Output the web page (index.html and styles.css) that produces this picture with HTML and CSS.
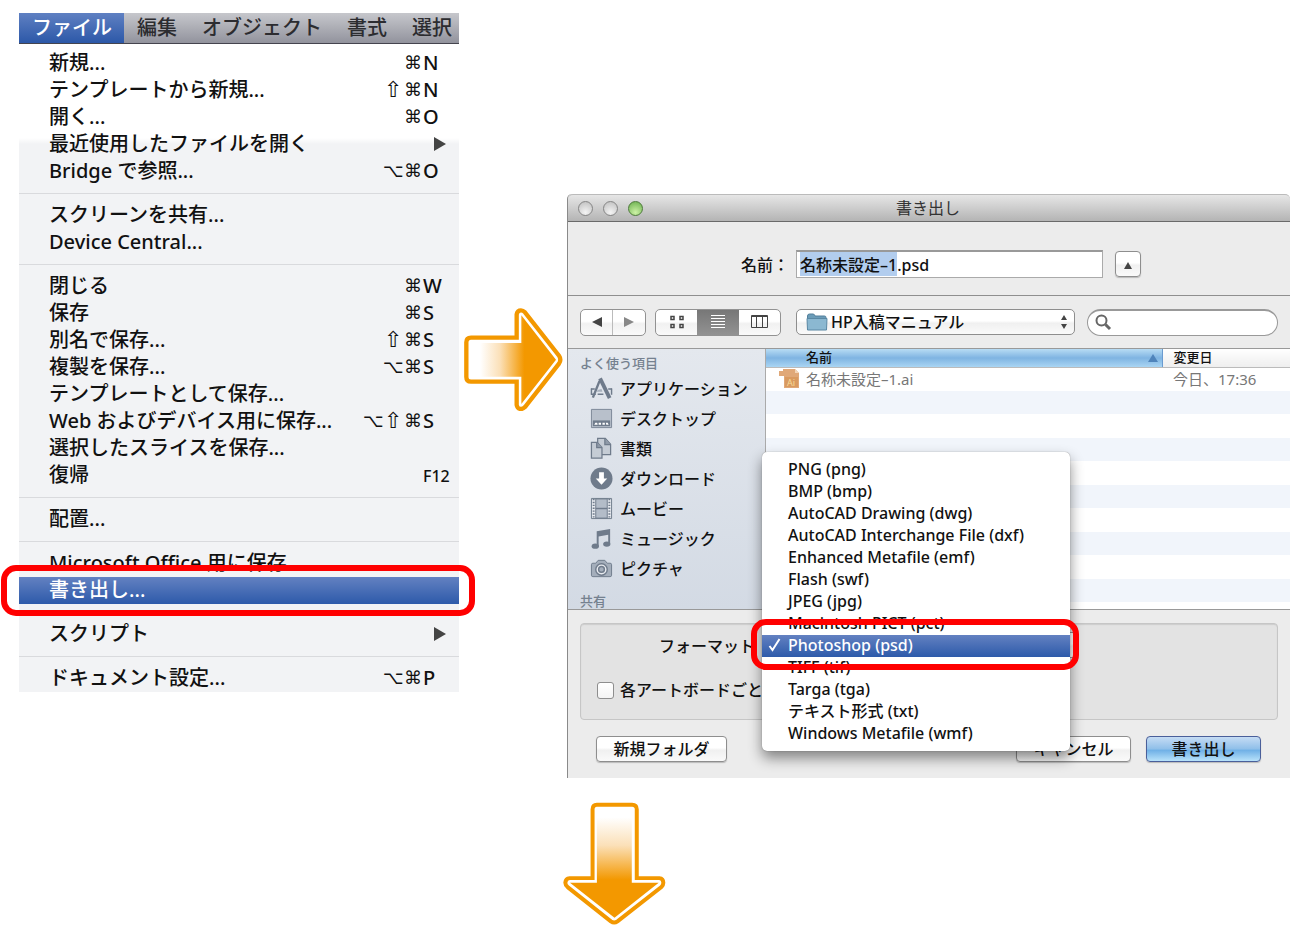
FILE: index.html
```
<!DOCTYPE html>
<html lang="ja">
<head>
  <meta charset="UTF-8" />
  <title>書き出し | HP入稿マニュアル</title>
  <meta name="viewport" content="width=device-width, initial-scale=1.0" />
  <link rel="stylesheet" href="styles.css">
</head>
<body>
  <main class="page">

    <!-- File menu -->
    <section class="app-menu">
      <nav class="menubar">
        <button class="menubar-item active">ファイル</button>
        <button class="menubar-item">編集</button>
        <button class="menubar-item">オブジェクト</button>
        <button class="menubar-item">書式</button>
        <button class="menubar-item">選択</button>
      </nav>
      <div class="menu" role="menu">
        <button class="menu-item" role="menuitem">新規...<span class="keys"><i>⌘</i><b>N</b></span></button>
        <button class="menu-item" role="menuitem">テンプレートから新規...<span class="keys"><i class="shift">⇧</i><i>⌘</i><b>N</b></span></button>
        <button class="menu-item" role="menuitem">開く...<span class="keys"><i>⌘</i><b>O</b></span></button>
        <button class="menu-item" role="menuitem">最近使用したファイルを開く<span class="submenu"></span></button>
        <button class="menu-item" role="menuitem">Bridge で参照...<span class="keys"><i>⌥</i><i>⌘</i><b>O</b></span></button>
        <hr>
        <button class="menu-item" role="menuitem">スクリーンを共有...</button>
        <button class="menu-item" role="menuitem">Device Central...</button>
        <hr>
        <button class="menu-item" role="menuitem">閉じる<span class="keys"><i>⌘</i><b>W</b></span></button>
        <button class="menu-item" role="menuitem">保存<span class="keys"><i>⌘</i><b>S</b></span></button>
        <button class="menu-item" role="menuitem">別名で保存...<span class="keys"><i class="shift">⇧</i><i>⌘</i><b>S</b></span></button>
        <button class="menu-item" role="menuitem">複製を保存...<span class="keys"><i>⌥</i><i>⌘</i><b>S</b></span></button>
        <button class="menu-item" role="menuitem">テンプレートとして保存...</button>
        <button class="menu-item" role="menuitem">Web およびデバイス用に保存...<span class="keys"><i>⌥</i><i class="shift">⇧</i><i>⌘</i><b>S</b></span></button>
        <button class="menu-item" role="menuitem">選択したスライスを保存...</button>
        <button class="menu-item" role="menuitem">復帰<span class="keys"><b class="fkey">F12</b></span></button>
        <hr>
        <button class="menu-item" role="menuitem">配置...</button>
        <hr>
        <button class="menu-item" role="menuitem">Microsoft Office 用に保存</button>
        <button class="menu-item selected" role="menuitem">書き出し...<span class="ring"></span></button>
        <hr>
        <button class="menu-item" role="menuitem">スクリプト<span class="submenu"></span></button>
        <hr>
        <button class="menu-item" role="menuitem">ドキュメント設定...<span class="keys"><i>⌥</i><i>⌘</i><b>P</b></span></button>
      </div>
    </section>

    <svg class="arrow-right" viewBox="27 25 297 309" aria-hidden="true">
      <defs>
        <linearGradient id="fadeRight" gradientUnits="userSpaceOnUse" x1="75" y1="0" x2="208" y2="0">
          <stop offset="0" stop-color="#fff"/><stop offset=".45" stop-color="#fbe0b8"/><stop offset="1" stop-color="#f39800"/>
        </linearGradient>
      </defs>
      <path d="M34 128Q34 114 48 114H185V44Q187 32 198 32Q204 32 210 38L312 168Q320 180 312 192L210 322Q204 328 198 328Q187 328 185 316V246H48Q34 246 34 232Z" fill="#fff" stroke="#f39800" stroke-width="13"/>
      <path d="M46 130H199V47L303 180L199 313V231H46Z" fill="url(#fadeRight)"/>
    </svg>

    <div class="column">
      <!-- Export dialog -->
      <section class="dialog">
        <header class="titlebar">
          <span class="light"></span><span class="light"></span><span class="light green"></span>
          <h1>書き出し</h1>
        </header>

        <div class="name-row">
          <label for="filename">名前：</label>
          <input type="text" id="filename" value="名称未設定–1.psd" autocomplete="off" spellcheck="false">
          <button class="btn square" aria-label="閉じる"><svg width="10" height="8" viewBox="0 0 10 8"><path d="M5 0L9 7H1Z" fill="#444"/></svg></button>
        </div>

        <div class="toolbar">
          <div class="btn-group nav-group">
            <button aria-label="戻る"><svg width="12" height="12" viewBox="0 0 12 12"><path d="M11 1V11L1 6Z" fill="#444"/></svg></button>
            <button aria-label="進む"><svg width="12" height="12" viewBox="0 0 12 12"><path d="M1 1V11L11 6Z" fill="#888"/></svg></button>
          </div>
          <div class="btn-group view-group">
            <button aria-label="アイコン"><svg width="16" height="14" viewBox="0 0 16 14" fill="none" stroke="#444" stroke-width="1.5"><path d="M2 1.5h3v3H2zM11 1.5h3v3h-3zM2 9.5h3v3H2zM11 9.5h3v3h-3z"/></svg></button>
            <button class="on" aria-label="リスト"><svg width="14" height="14" viewBox="0 0 14 14" stroke="#fff"><path d="M0 .5h14M0 3.5h14M0 6.5h14M0 9.5h14M0 12.5h14"/></svg></button>
            <button aria-label="カラム"><svg width="17" height="14" viewBox="0 0 17 14" fill="none" stroke="#444"><path d="M.5 .5h16v12H.5zM5.5 1v12M11.5 1v12M.5 1.5h16"/></svg></button>
          </div>
          <div class="folder">
            <svg class="folder-icon" width="22" height="18" viewBox="0 0 22 18"><path d="M1.500 3Q1.500 1 3.500 1H7Q8.500 1 9 3H18.500Q20 3 20 4.500V6H1.500Z" fill="#6b9cb8" stroke="#527f9b"/><path d="M1 5.500H21L20.500 17H1.500Z" fill="#8bb8d1" stroke="#5a88a4"/></svg>
            <select class="popup-button" aria-label="フォルダ"><option>HP入稿マニュアル</option></select>
            <svg class="updown" width="8" height="14" viewBox="0 0 8 14"><path d="M4 0L7 5H1ZM4 14L1 9H7Z" fill="#444"/></svg>
          </div>
          <div class="search">
            <svg width="17" height="17" viewBox="0 0 17 17" fill="none" stroke="#666"><circle cx="6.500" cy="6.500" r="5" stroke-width="2"/><path d="M10.500 10.500L15 15" stroke-width="3"/></svg>
            <input type="text" aria-label="検索">
          </div>
        </div>

        <div class="browser">
          <aside class="sidebar">
            <h2>よく使う項目</h2>
            <ul>
              <li><a href="#">
                <svg viewBox="0 0 24 24" fill="none" stroke="#6f7b8b"><path d="M10 4L3 21.500" stroke-width="2.500"/><path d="M10.500 1.500L20.500 22" stroke-width="4"/><path d="M1.500 12V18.500M22.500 12V18.500" stroke-width="1.500"/><path d="M1 12.500H5M19 12.500H23M1 18H6M8 18H14" stroke-width="1.500"/><path d="M8 13.500L12 12.500L13 15.500H7Z" fill="#a9b2be" stroke="none"/></svg>
                アプリケーション</a></li>
              <li><a href="#">
                <svg viewBox="0 0 24 24"><path d="M1.500 2.500h21v19h-21z" fill="#b8c0cb" stroke="#7b8796"/><path d="M3 14h18v6H3z" fill="#6f7b8b"/><path d="M4.500 18.500l1-2h2l.5 2zM9 18.500v-2h2.500v2zM13 18.500v-2h2.500v2zM19.500 18.500l-1-2h-2l.5 2z" fill="#fff"/></svg>
                デスクトップ</a></li>
              <li><a href="#">
                <svg viewBox="0 0 24 24" fill="#c5ccd5" stroke="#6f7b8b" stroke-width="1.300"><path d="M8 1.500H16L21.500 7.500V18.500H8Z"/><path d="M15.500 1.500V8H21.500" fill="#8e99a7"/><path d="M1.500 5.500H7.500L12.500 11V22H1.500Z"/><path d="M7 5.500V11H12.500" fill="#8e99a7"/></svg>
                書類</a></li>
              <li><a href="#">
                <svg viewBox="0 0 24 24"><circle cx="12" cy="12" r="11.500" fill="#6f7b8b"/><path d="M9.500 5.500h5V12H18L12 18.500L6 12H9.500Z" fill="#fff"/></svg>
                ダウンロード</a></li>
              <li><a href="#">
                <svg viewBox="0 0 24 24"><path d="M1.500 1.500h21v21h-21z" fill="#e8ebf0" stroke="#6f7b8b"/><path d="M6 2h12v20H6z" fill="#b3bcc8" stroke="#6f7b8b"/><path d="M6 12h12" stroke="#6f7b8b" stroke-width="1.500"/><path d="M3.800 2v20M20.200 2v20" stroke="#6f7b8b" stroke-width="2" stroke-dasharray="1.500 1.500"/></svg>
                ムービー</a></li>
              <li><a href="#">
                <svg viewBox="0 0 24 24" fill="#6f7b8b"><path d="M7 4.500L21 2V17.500H19V8L9 10V20H7Z"/><ellipse cx="5.500" cy="20" rx="3.800" ry="2.800"/><ellipse cx="17.500" cy="17.800" rx="3.800" ry="2.800"/></svg>
                ミュージック</a></li>
              <li><a href="#">
                <svg viewBox="0 0 24 24" fill="#a4aebb" stroke="#6f7b8b"><path d="M3 6.500H6L8.500 3.500H15.500L18 6.500H21Q22.500 6.500 22.500 8V19Q22.500 20.500 21 20.500H3Q1.500 20.500 1.500 19V8Q1.500 6.500 3 6.500Z"/><circle cx="12" cy="13" r="6" fill="#e8ebf0" stroke-width="1.500"/><circle cx="12" cy="13" r="3" stroke-width="1.500"/></svg>
                ピクチャ</a></li>
            </ul>
            <h2>共有</h2>
          </aside>
          <div class="files">
            <table>
              <thead>
                <tr><th class="sorted">名前<span class="sort"></span></th><th class="date">変更日</th></tr>
              </thead>
              <tbody>
                <tr>
                  <td><svg class="ai-icon" width="21" height="19" viewBox="0 0 21 19"><path d="M0 2H4V0H16L20 4V19H5V7H0Z" fill="#e0a878"/><path d="M16 0V4H20Z" fill="#f3d5b8"/><path d="M6 8H19V18H6Z" fill="#d99a60"/><text x="8" y="17" font-size="9" fill="#f8dc98">Ai</text></svg>名称未設定–1.ai</td>
                  <td class="date">今日、17:36</td>
                </tr>
              </tbody>
            </table>
          </div>
        </div>

        <footer class="options">
          <div class="option-box">
            <div class="format-row">
              <label for="format">フォーマット</label>
              <div class="format-field">
                <select id="format" class="popup-button"><option>Photoshop (psd)</option></select>
                <ul class="format-list">
                  <li>PNG (png)</li>
                  <li>BMP (bmp)</li>
                  <li>AutoCAD Drawing (dwg)</li>
                  <li>AutoCAD Interchange File (dxf)</li>
                  <li>Enhanced Metafile (emf)</li>
                  <li>Flash (swf)</li>
                  <li>JPEG (jpg)</li>
                  <li>Macintosh PICT (pct)</li>
                  <li class="selected"><svg class="check" width="13" height="14" viewBox="0 0 13 14"><path d="M1.500 8L4.500 12L11.500 1" fill="none" stroke="#fff" stroke-width="2"/></svg>Photoshop (psd)<span class="ring"></span></li>
                  <li>TIFF (tif)</li>
                  <li>Targa (tga)</li>
                  <li>テキスト形式 (txt)</li>
                  <li>Windows Metafile (wmf)</li>
                </ul>
              </div>
            </div>
            <label class="artboards"><input type="checkbox">各アートボードごと</label>
          </div>
          <div class="actions">
            <button class="btn new-folder">新規フォルダ</button>
            <button class="btn">キャンセル</button>
            <button class="btn primary">書き出し</button>
          </div>
        </footer>
      </section>

      <svg class="arrow-down" viewBox="36 35 310 368" aria-hidden="true">
        <defs>
          <linearGradient id="fadeDown" gradientUnits="userSpaceOnUse" x1="0" y1="80" x2="0" y2="268">
            <stop offset="0" stop-color="#fff"/><stop offset=".45" stop-color="#fbe0b8"/><stop offset="1" stop-color="#f39800"/>
          </linearGradient>
        </defs>
        <path d="M138 42H244Q258 42 258 56V263H326Q338 264 338 277Q338 284 332 290L200 393Q190 400 180 393L50 290Q43 284 43 277Q44 264 56 263H125V56Q125 42 138 42Z" fill="#fff" stroke="#f39800" stroke-width="12"/>
        <path d="M138 54H243V277H324L191 382L57 277H138Z" fill="url(#fadeDown)"/>
      </svg>
    </div>
  </main>

  <script>
    // Select the name without its extension
    const filename = document.getElementById("filename");
    filename.focus();
    filename.setSelectionRange(0, filename.value.lastIndexOf("."));
  </script>
</body>
</html>
```
FILE: styles.css
```
* { box-sizing: border-box; }

body {
  margin: 0;
  background: #fff;
  color: #111;
  font-family: "Noto Sans", "Noto Sans CJK JP", sans-serif;
  font-size: 16px;
  font-weight: 500;
}

button, input, select {
  font: inherit;
  color: inherit;
  margin: 0;
}

button {
  border: none;
  background: none;
  padding: 0;
}

h1, h2, ul {
  margin: 0;
  padding: 0;
  list-style: none;
}

.page {
  display: flex;
  align-items: flex-start;
  padding-top: 13px;
  padding-left: 19px;
}

/* File menu */
.app-menu {
  flex: 0 0 440px;
  font-size: 20px;
}

.menubar {
  display: flex;
  height: 31px;
  overflow: hidden;
  background: linear-gradient(#c6c7cc, #92939d);
  border-bottom: 1px solid #44444e;
}

.menubar-item {
  flex: none;
  padding: 0 12px 0 13px;
  line-height: 28px;
  color: #2c2c30;
}

.menubar-item.active {
  color: #fff;
  background: linear-gradient(#5f80c2, #2c58a8);
}

.menu {
  padding-top: 6px;
  background: linear-gradient(#fff 94px, #f2f3f5 100px);
}

.menu hr {
  height: 1px;
  margin: 8px 0;
  border: none;
  background: #d9dadd;
}

.menu-item {
  position: relative;
  display: flex;
  width: 100%;
  height: 27px;
  padding-left: 30px;
  padding-bottom: 2px;
  line-height: 25px;
  text-align: left;
  white-space: nowrap;
}

.selected {
  color: #fff;
  background: linear-gradient(#6381c1, #2d5aaa);
}

.keys {
  display: flex;
  margin-left: auto;
}

.keys i {
  width: 20px;
  font-family: "DejaVu Sans", sans-serif;
  font-size: 18px;
  font-style: normal;
  text-align: center;
}

.keys .shift { font-size: 22px; }

.keys b {
  width: 36px;
  font-weight: inherit;
}

.keys .fkey {
  font-size: 16px;
  padding-top: 2px;
}

.submenu {
  margin: 6px 13px 0 auto;
  border-left: 12px solid #444;
  border-top: 7px solid transparent;
  border-bottom: 7px solid transparent;
  height: 14px;
}

.ring {
  position: absolute;
  z-index: 3;
  top: -12px;
  right: -16px;
  bottom: -12px;
  left: -18px;
  border: 6px solid #f00;
  border-radius: 15px;
}

/* Arrows */
.arrow-right {
  flex: none;
  width: 99px;
  height: 103px;
  margin-top: 295px;
  margin-left: 5px;
}

.arrow-down {
  display: block;
  width: 103px;
  height: 123px;
  margin-top: 24px;
}

.column {
  flex: 1;
  margin-top: 181px;
  min-width: 0;
}

/* Export dialog */
.dialog {
  margin-left: 4px;
  border-left: 1px solid #8a8a8a;
  border-radius: 5px 5px 0 0;
  background: #ececec;
}

.titlebar {
  display: flex;
  align-items: center;
  gap: 10px;
  height: 28px;
  padding: 0 10px;
  border-top: 1px solid #bbb;
  border-bottom: 1px solid #6a6a6a;
  border-radius: 5px 5px 0 0;
  background: linear-gradient(#e6e6e6, #b4b4b4);
}

.titlebar h1 {
  flex: 1;
  padding-right: 77px;
  font-size: 16px;
  font-weight: 400;
  line-height: 24px;
  text-align: center;
  color: #333;
}

.light {
  width: 15px;
  height: 15px;
  border: 1px solid #858585;
  border-radius: 50%;
  background: radial-gradient(circle at 50% 80%, #f4f4f4, #bdbdbd);
}

.light.green {
  border-color: #4d7a3a;
  background: radial-gradient(circle at 50% 80%, #cdf2a6, #68ae4c);
}

.name-row {
  display: flex;
  align-items: center;
  height: 74px;
  padding: 10px 149px 0 173px;
  border-bottom: 1px solid #8f8f8f;
}

.name-row label {
  width: 55px;
  white-space: nowrap;
}

.name-row input {
  flex: 1;
  min-width: 0;
  height: 28px;
  margin-right: 12px;
  padding: 0 3px;
  border: 1px solid #aaa;
  border-top: 2px solid #999;
  background: #fff;
  outline: none;
}

.name-row input::selection {
  color: #111;
  background: #b2cdee;
}

.btn {
  height: 26px;
  border: 1px solid #8e8e8e;
  border-radius: 4px;
  background: linear-gradient(#fff 45%, #f0f0f0 55%, #fafafa);
  box-shadow: 0 1px 1px #bbb;
}

.btn.square {
  width: 26px;
  line-height: 16px;
}

.toolbar {
  display: flex;
  align-items: center;
  height: 52px;
  padding: 0 12px;
}

.btn-group {
  display: flex;
  height: 27px;
  border: 1px solid #929292;
  border-radius: 5px;
  background: linear-gradient(#fff 45%, #f1f1f1 55%, #fafafa);
  overflow: hidden;
}

.btn-group button {
  display: flex;
  flex: 1;
  align-items: center;
  justify-content: center;
}

.nav-group { width: 66px; margin-right: 9px; }
.nav-group button + button { box-shadow: -1px 0 #bbb; }
.view-group { width: 126px; margin-right: 15px; }
.view-group .on { background: linear-gradient(#777, #929292); }

.popup-button {
  width: 100%;
  height: 26px;
  border: 1px solid #8e8e8e;
  border-radius: 5px;
  background: linear-gradient(#fff 45%, #f0f0f0 55%, #fafafa);
  appearance: none;
}

.folder {
  position: relative;
  flex: 8;
  min-width: 0;
  margin-right: 12px;
}

.folder .popup-button { padding: 0 24px 0 34px; display: block; }
.folder-icon { position: absolute; top: 4px; left: 10px; }
.updown { position: absolute; top: 6px; right: 7px; }

.search {
  display: flex;
  flex: 5;
  align-items: center;
  min-width: 0;
  height: 27px;
  padding: 0 7px;
  border: 1px solid #999;
  border-top: 2px solid #999;
  border-radius: 14px;
  background: #fff;
}

.search svg { flex: none; }

.search input {
  width: 100%;
  min-width: 0;
  border: none;
  outline: none;
  background: none;
}

/* File browser */
.browser {
  display: flex;
  height: 262px;
  border-top: 1px solid #999;
  border-bottom: 1px solid #999;
}

.sidebar {
  flex: 0 0 198px;
  overflow: hidden;
  border-right: 1px solid #aaa;
  background: linear-gradient(#e4e8ee, #d3dae4);
}

.sidebar h2 {
  height: 24px;
  padding: 4px 0 0 12px;
  font-size: 13px;
  font-weight: 500;
  line-height: 20px;
  color: #75818f;
}

.sidebar ul { margin-bottom: 4px; }

.sidebar a {
  display: flex;
  align-items: center;
  gap: 7px;
  height: 30px;
  padding-left: 22px;
  color: inherit;
  text-decoration: none;
}

.sidebar svg { width: 23px; height: 23px; }

.files {
  flex: 1;
  background: repeating-linear-gradient(#fff 0 24px, #f1f5fb 24px 47px) 0 18px;
}

.files table {
  width: 100%;
  border-collapse: collapse;
  table-layout: fixed;
}

.files th {
  height: 18px;
  padding: 0 0 2px 40px;
  font-size: 13px;
  font-weight: 500;
  line-height: 14px;
  text-align: left;
  background: linear-gradient(#fff, #eee);
  border-bottom: 1px solid #bbb;
}

.files th.sorted {
  background: linear-gradient(#b8dcf4, #7fb4e2 50%, #a9d5f3);
  border-right: 1px solid #6a9bd0;
}

.sort {
  float: right;
  margin: 4px 4px 0 0;
  border: 5px solid transparent;
  border-top: none;
  border-bottom: 8px solid #4f84bb;
}

.files .date { width: 128px; padding-left: 11px; }

.files td {
  height: 24px;
  padding: 0 0 1px 13px;
  font-size: 15px;
  font-weight: 400;
  line-height: 22px;
  color: #777;
  white-space: nowrap;
}

.ai-icon {
  margin-right: 6px;
  vertical-align: -3px;
}

/* Format options */
.options { padding: 13px 12px 16px; }

.option-box {
  height: 97px;
  padding: 8px 16px;
  border: 1px solid #c6c6c6;
  border-radius: 4px;
  background: #e3e3e3;
  box-shadow: inset 0 1px 1px #ccc;
}

.format-row {
  display: flex;
  align-items: center;
  height: 26px;
  padding-left: 62px;
}

.format-row label {
  width: 103px;
  padding-bottom: 1px;
}

.format-field {
  position: relative;
  width: 317px;
  height: 26px;
}

.format-list {
  position: absolute;
  z-index: 2;
  top: -180px;
  right: 9px;
  left: 0;
  padding: 7px 0 6px;
  border-radius: 5px;
  background: #fff;
  box-shadow: 0 7px 14px rgba(0, 0, 0, 0.45), 0 0 1px #777;
}

.format-list li {
  position: relative;
  height: 22px;
  padding-left: 26px;
  line-height: 21px;
  white-space: nowrap;
}

.format-list .ring {
  top: -16px;
  right: -9px;
  bottom: -13px;
  left: -11px;
}

.check {
  position: absolute;
  top: 3px;
  left: 6px;
}

.artboards {
  display: flex;
  align-items: center;
  gap: 6px;
  margin-top: 20px;
  line-height: 24px;
}

.artboards input {
  width: 17px;
  height: 17px;
  border: 1px solid #8e8e8e;
  border-radius: 3px;
  background: linear-gradient(#fff, #f4f4f4);
  appearance: none;
}

.actions {
  display: flex;
  gap: 15px;
  margin-top: 16px;
  padding: 0 17px 0 16px;
}

.actions .btn {
  width: 115px;
  line-height: 22px;
}

.actions .new-folder {
  width: 131px;
  margin-right: auto;
}

.actions .primary {
  border-color: #4a5f9a;
  background: linear-gradient(#c5dcf4, #8fbfe9 50%, #6fb0e6 55%, #b8e2fa);
}
```
